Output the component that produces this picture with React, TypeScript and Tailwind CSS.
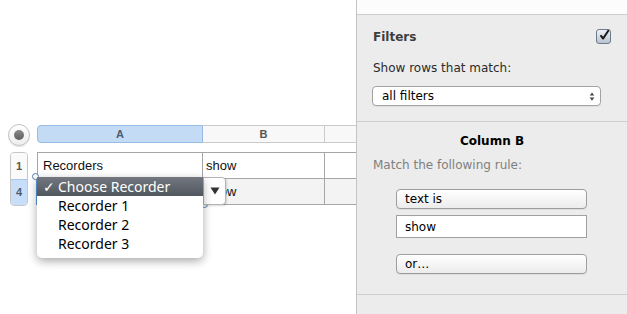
import React from 'react';

const CheckMark: React.FC<React.SVGProps<SVGSVGElement>> = (props) => (
  <svg {...props} viewBox="0 0 14 14" fill="none" stroke="currentColor" strokeWidth="2.4" strokeLinecap="round" strokeLinejoin="round">
    <path d="M3.5 7.5 6 10.5 12 1.5" />
  </svg>
);

const UpDown: React.FC<React.SVGProps<SVGSVGElement>> = (props) => (
  <svg {...props} viewBox="0 0 6 12" fill="currentColor">
    <path d="M3 1.5 5.5 5H0.5z" /><path d="M3 10.5 5.5 7H0.5z" />
  </svg>
);

const ui = { fontFamily: '"Lucida Grande", "DejaVu Sans", sans-serif' };
const menu = { fontFamily: '"Lucida Grande", "Noto Sans", "DejaVu Sans", sans-serif' };
const cell = { fontFamily: '"Liberation Sans", Arial, sans-serif' };

const Spreadsheet: React.FC = () => (
  <div className="relative w-[356px] shrink-0 overflow-hidden bg-white pt-[124px]" style={cell}>
    {/* column headers */}
    <div className="flex items-start">
      <div className="ml-[8px] flex h-[22px] w-[22px] shrink-0 items-center justify-center rounded-full border border-[#c2c2c2] bg-gradient-to-b from-white to-[#ededed] shadow-[0_1px_1px_rgba(0,0,0,0.12)]">
        <div className="h-[10px] w-[10px] rounded-full bg-gradient-to-b from-[#8a8a8a] to-[#5e5e5e]" />
      </div>
      <div className="ml-[7px] mt-[1px] flex h-[18px] shrink-0">
        <div className="flex w-[166px] items-center justify-center rounded-l-[4px] border border-[#97bbe4] bg-[#c4dbf6] text-[11px] font-bold text-[#4d5d70]">A</div>
        <div className="flex w-[122px] items-center justify-center border-y border-r border-[#cacaca] bg-[#f8f8f8] text-[11px] font-bold text-[#555]">B</div>
        <div className="w-[40px] border-y border-r border-[#cacaca] bg-[#f8f8f8]" />
      </div>
    </div>

    {/* rows */}
    <div className="mt-[6px] flex">
      <div className="ml-[10px] flex w-[18px] shrink-0 flex-col overflow-hidden rounded-[4px] border border-[#c6c6c6] text-[11px] font-bold text-[#555]">
        <div className="flex h-[26px] items-center justify-center bg-[#fafafa]">1</div>
        <div className="flex h-[26px] items-center justify-center border-t border-[#a9c6e8] bg-[#c8ddf7] text-[#4d5d70]">4</div>
      </div>
      <div className="ml-[9px] flex flex-col border-t border-[#a6a6a6] text-[13px] text-[#111]">
        <div className="flex h-[26px] border-b border-[#a6a6a6]">
          <div className="flex w-[166px] items-center border-x border-[#a6a6a6] bg-white pl-[5px]">Recorders</div>
          <div className="flex w-[122px] items-center border-r border-[#a6a6a6] bg-white pl-[3px]">show</div>
          <div className="w-[40px] bg-white" />
        </div>
        <div className="flex h-[26px] border-b border-[#a6a6a6] bg-[#f3f3f3]">
          <div className="w-[166px] border-x border-[#a6a6a6]" />
          <div className="flex w-[122px] items-center border-r border-[#a6a6a6] pl-[3px]">show</div>
          <div className="w-[40px]" />
        </div>
      </div>
    </div>

    {/* cell editor selection */}
    <div className="absolute left-[36px] top-[177px] h-[28px] w-[169px] border border-[#5b95dc]" />
    <div className="absolute left-[32px] top-[173px] h-[7px] w-[7px] rounded-full border border-[#5a7fae] bg-white" />
    <div className="absolute left-[201px] top-[201px] h-[7px] w-[7px] rounded-full border border-[#5a7fae] bg-white" />

    {/* popup arrow button */}
    <div className="absolute left-[203px] top-[177px] flex h-[28px] w-[23px] items-center justify-center rounded-r-[4px] border border-[#b4b4b4] bg-white shadow-[1px_1px_2px_rgba(0,0,0,0.15)]">
      <svg width="10" height="8" viewBox="0 0 10 8" fill="#333"><path d="M0.5 0.5h9L5 7.5z" /></svg>
    </div>

    {/* popup menu */}
    <div className="absolute left-[37px] top-[177px] w-[166px] rounded-b-[5px] bg-white pb-[5px] text-[14px] text-black shadow-[0_3px_10px_rgba(0,0,0,0.35)]" style={menu}>
      <div className="flex h-[19px] items-center bg-gradient-to-b from-[#737880] to-[#51575e] text-white">
        <span className="w-[21px] pl-[6px] text-[14px] font-bold">✓</span>
        <span>Choose Recorder</span>
      </div>
      {['Recorder 1', 'Recorder 2', 'Recorder 3'].map((r) => (
        <div key={r} className="flex h-[19px] items-center pl-[21px]">{r}</div>
      ))}
    </div>
  </div>
);

const PushButton: React.FC<{ label: string }> = ({ label }) => (
  <div className="flex h-[20px] w-[191px] items-center rounded-[4px] border border-[#9d9d9d] bg-gradient-to-b from-white to-[#ececec] pl-[8px] text-[12px] text-black shadow-[0_1px_0_rgba(0,0,0,0.06)]">
    {label}
  </div>
);

const Sidebar: React.FC = () => (
  <div className="flex flex-1 flex-col border-l border-[#c4c4c4] bg-[#ececec]" style={ui}>
    <div className="h-[15px] shrink-0 border-b border-[#cdcdcd] bg-[#fcfcfc]" />

    <div className="flex h-[107px] shrink-0 flex-col border-b border-[#cdcdcd] pl-[16px] pr-[16px] pt-[14px]">
      <div className="flex h-[15px] items-center justify-between">
        <span className="mt-[1px] text-[12px] font-bold text-[#3d3d3d]">Filters</span>
        <div className="flex h-[15px] w-[15px] items-center justify-center rounded-[3px] border border-[#6f7a88] bg-gradient-to-b from-[#eef2f7] to-[#b8c3d1]">
          <CheckMark className="-mt-[2px] ml-[1px] h-[13px] w-[13px] text-[#1a1a1a]" />
        </div>
      </div>
      <div className="mt-[17px] h-[15px] text-[12px] leading-[15px] text-[#2a2a2a]">Show rows that match:</div>
      <div className="-ml-px mt-[10px] flex h-[20px] w-[229px] items-center justify-between rounded-[4px] border border-[#a3a3a3] bg-white pl-[9px] pr-[5px] text-[12px] text-black shadow-[0_1px_0_rgba(0,0,0,0.05)]">
        <span>all filters</span>
        <UpDown className="h-[11px] w-[6px] text-[#444]" />
      </div>
    </div>

    <div className="flex h-[173px] shrink-0 flex-col border-b border-[#cdcdcd] pl-[16px] pt-[12px]">
      <div className="h-[15px] pr-[16px] text-center text-[12px] font-bold leading-[15px] text-black">Column B</div>
      <div className="mt-[9px] h-[15px] text-[12px] leading-[15px] text-[#7f7f7f]">Match the following rule:</div>
      <div className="ml-[23px] mt-[16px] flex flex-col">
        <PushButton label="text is" />
        <div className="mt-[6px] flex h-[23px] w-[191px] items-center border border-[#a0a0a0] bg-white pl-[8px] text-[12px] text-black">show</div>
        <div className="mt-[16px]">
          <PushButton label="or…" />
        </div>
      </div>
    </div>
  </div>
);

export default function App() {
  return (
    <div className="flex h-[314px] w-[627px] overflow-hidden bg-white">
      <Spreadsheet />
      <Sidebar />
    </div>
  );
}
